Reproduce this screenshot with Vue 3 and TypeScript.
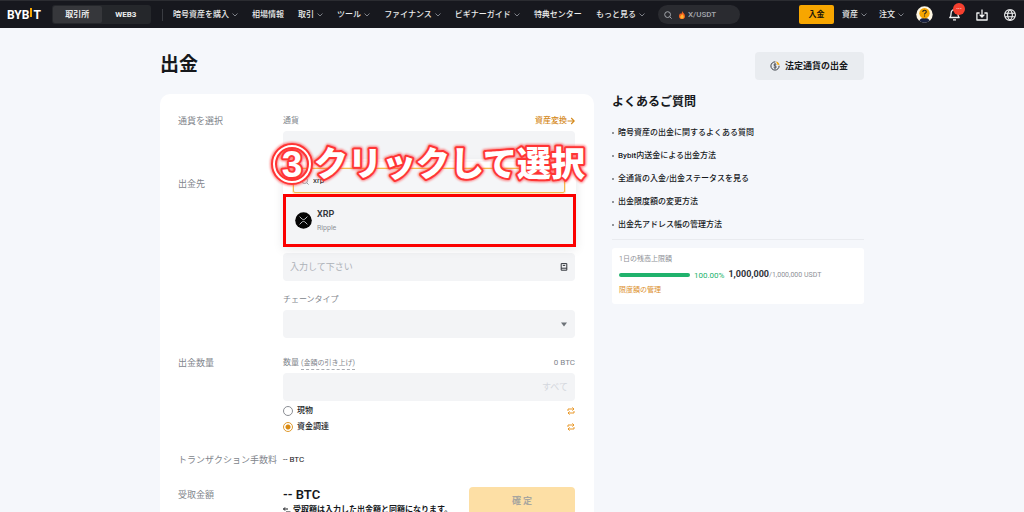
<script setup lang="ts">
import { ref } from 'vue'

interface NavItem {
  label: string
  menu: boolean
}

const navItems: NavItem[] = [
  { label: '暗号資産を購入', menu: true },
  { label: '相場情報', menu: false },
  { label: '取引', menu: true },
  { label: 'ツール', menu: true },
  { label: 'ファイナンス', menu: true },
  { label: 'ビギナーガイド', menu: true },
  { label: '特典センター', menu: false },
  { label: 'もっと見る', menu: true },
]

const faqs: string[] = [
  '暗号資産の出金に関するよくある質問',
  'Bybit内送金による出金方法',
  '全通貨の入金/出金ステータスを見る',
  '出金限度額の変更方法',
  '出金先アドレス帳の管理方法',
]

const accounts = [
  { id: 'spot', label: '現物' },
  { id: 'funding', label: '資金調達' },
]

const account = ref('funding')
const coinQuery = ref('xrp')
const address = ref('')
const amount = ref('')
const chain = ref('')
</script>

<template>
  <div class="page">
    <header class="topbar">
      <a class="logo" href="#" aria-label="BYBIT">
        <span>BYB</span><span class="logo-bar"></span><span>T</span>
      </a>
      <div class="switch">
        <button type="button" class="on">取引所</button>
        <button type="button">WEB3</button>
      </div>
      <span class="divider"></span>
      <nav class="nav">
        <a v-for="item in navItems" :key="item.label" href="#">
          {{ item.label }}
          <svg v-if="item.menu" class="chev" viewBox="0 0 6 4"><path d="M0.5 0.5L3 3L5.5 0.5" /></svg>
        </a>
      </nav>
      <label class="search">
        <svg class="lens" viewBox="0 0 8 8"><circle cx="3.6" cy="3.6" r="2.9" /><path d="M5.7 5.7L7.6 7.6" /></svg>
        <svg class="flame" viewBox="0 0 6 8">
          <path d="M3.2 0C3.6 1.6 6 2.8 6 5.2A3 2.8 0 0 1 0 5.2C0 3.8 0.8 3 1.2 2.2C1.6 2.6 1.8 2.9 2 3.2C2.8 2.2 3.2 1.2 3.2 0Z" fill="#f4611e" />
          <path d="M3.2 3C3.6 4 4.8 4.6 4.8 5.9A1.8 1.8 0 0 1 1.2 5.9C1.2 4.8 2.8 4.2 3.2 3Z" fill="#ffb52e" />
        </svg>
        <input type="text" placeholder="X/USDT" aria-label="検索" />
      </label>
      <div class="tools">
        <button type="button" class="deposit">入金</button>
        <a href="#">資産<svg class="chev" viewBox="0 0 6 4"><path d="M0.5 0.5L3 3L5.5 0.5" /></svg></a>
        <a href="#">注文<svg class="chev" viewBox="0 0 6 4"><path d="M0.5 0.5L3 3L5.5 0.5" /></svg></a>
        <button type="button" class="icon" aria-label="アカウント">
          <svg width="17" height="17" viewBox="0 0 17 17">
            <defs><clipPath id="face"><circle cx="8.5" cy="8.5" r="8.2" /></clipPath></defs>
            <circle cx="8.5" cy="8.5" r="8.2" fill="#fdf6e3" />
            <g clip-path="url(#face)">
              <path d="M3 17C3 13 5.5 12 8.5 12S14 13 14 17Z" fill="#17203f" />
              <circle cx="8.5" cy="7.2" r="5.2" fill="#f7a600" />
            </g>
            <path d="M6.8 5.9C6.8 3.6 10.3 3.7 10.3 5.8C10.3 7.2 8.5 7 8.5 8.5M8.5 9.4V10.5" fill="none" stroke="#27251f" stroke-width="1.1" />
          </svg>
        </button>
        <button type="button" class="icon bell" aria-label="通知">
          <svg width="11" height="13" viewBox="0 0 11 13">
            <path d="M0.8 9.5H10.2C9.2 8.6 8.9 7.8 8.9 5.2C8.9 3 7.6 1.6 5.5 1.6S2.1 3 2.1 5.2C2.1 7.8 1.8 8.6 0.8 9.5ZM4 11.8H7" fill="none" stroke="#f1f2f3" stroke-width="1.3" stroke-linejoin="round" />
          </svg>
          <span class="dot">···</span>
        </button>
        <button type="button" class="icon" aria-label="ダウンロード">
          <svg width="12" height="12" viewBox="0 0 12 12">
            <path d="M3.6 4H0.9V11H11.1V4H8.4M6 0.4V7.8M3.6 5.6L6 8L8.4 5.6" fill="none" stroke="#f1f2f3" stroke-width="1.3" stroke-linejoin="round" />
          </svg>
        </button>
        <button type="button" class="icon" aria-label="言語">
          <svg width="12" height="12" viewBox="0 0 12 12">
            <path d="M6 0.6A5.4 5.4 0 1 0 6 11.4A5.4 5.4 0 1 0 6 0.6ZM6 0.6C2.8 3.4 2.8 8.6 6 11.4C9.2 8.6 9.2 3.4 6 0.6ZM0.8 4.3H11.2M0.8 7.7H11.2" fill="none" stroke="#f1f2f3" stroke-width="1.1" />
          </svg>
        </button>
      </div>
    </header>

    <main class="main">
      <div class="heading">
        <h1>出金</h1>
        <button type="button" class="fiat">
          <svg width="10" height="10" viewBox="0 0 10 10">
            <path d="M5.4 0.9A4.1 4.1 0 1 0 9.1 4.8" fill="none" stroke="#3a3e45" stroke-width="1" />
            <path d="M6.4 3.6C5.8 2.7 3.8 2.8 3.8 4C3.8 5.2 6.4 4.7 6.4 6C6.4 7.2 4.2 7.2 3.6 6.3M5 2.2V7.8" fill="none" stroke="#3a3e45" stroke-width="0.8" />
            <path d="M6.6 0.8A4.4 4.4 0 0 1 9.2 3.6L7.6 3.4Z" fill="#f7a600" stroke="#f7a600" stroke-width="0.6" />
          </svg>
          法定通貨の出金
        </button>
      </div>

      <div class="columns">
        <form class="card" @submit.prevent>
          <section class="row">
            <h2>通貨を選択</h2>
            <div class="coin">
              <div class="caption">
                <span>通貨</span>
                <a class="convert" href="#">資産変換<svg width="8" height="8" viewBox="0 0 8 8"><path d="M0.5 4H7M4.2 1L7.2 4L4.2 7" fill="none" stroke="currentColor" stroke-width="1.1" /></svg></a>
              </div>
              <button type="button" class="field" aria-label="通貨"></button>
              <div class="dropdown">
                <label class="coin-search">
                  <svg width="8" height="8" viewBox="0 0 8 8"><circle cx="3.6" cy="3.6" r="2.9" /><path d="M5.7 5.7L7.6 7.6" /></svg>
                  <input v-model="coinQuery" type="text" aria-label="通貨を検索" />
                </label>
                <button type="button" class="option">
                  <svg width="17" height="17" viewBox="0 0 17 17">
                    <circle cx="8.5" cy="8.5" r="8.3" fill="#050505" />
                    <path d="M4.6 4.6L7 7C7.9 7.8 9.1 7.8 10 7L12.4 4.6M4.6 12.4L7 10C7.9 9.2 9.1 9.2 10 10L12.4 12.4" fill="none" stroke="#b9bcc0" stroke-width="1" />
                  </svg>
                  <span><b>XRP</b><small>Ripple</small></span>
                </button>
              </div>
              <svg class="callout" viewBox="0 0 320 48" width="320" height="48">
                <g class="glow">
                  <circle cx="22" cy="24" r="18" />
                  <text class="num" x="22" y="37">3</text>
                  <text class="words" x="44" y="36">クリックして選択</text>
                </g>
                <g class="outline">
                  <circle cx="22" cy="24" r="18" />
                  <text class="num" x="22" y="37">3</text>
                  <circle class="ring" cx="22" cy="24" r="18" />
                  <text class="words" x="44" y="36">クリックして選択</text>
                </g>
              </svg>
            </div>
          </section>

          <section class="row">
            <h2>出金先</h2>
            <div>
              <label class="field address">
                <input v-model="address" type="text" placeholder="入力して下さい" aria-label="アドレス" />
                <svg width="8" height="8" viewBox="0 0 8 8"><path d="M1.2 0.6H6.8V7.2H1.2ZM1.2 5.2H6.8M2.8 2.4H5.2" fill="none" stroke="#30343a" stroke-width="1" /></svg>
              </label>
              <label class="caption chain-label" for="chain">チェーンタイプ</label>
              <div class="select">
                <select id="chain" v-model="chain" class="field"><option value=""></option></select>
                <svg width="6" height="5" viewBox="0 0 6 5"><path d="M0 0.5H6L3 4.5Z" fill="#6d7278" /></svg>
              </div>
            </div>
          </section>

          <section class="row">
            <h2>出金数量</h2>
            <div>
              <div class="caption">
                <label for="amount">数量 <span class="limit">(金額の引き上げ)</span></label>
                <span>0 BTC</span>
              </div>
              <div class="field amount">
                <input id="amount" v-model="amount" type="text" />
                <button type="button" disabled>すべて</button>
              </div>
              <div class="accounts">
                <div v-for="a in accounts" :key="a.id" class="account">
                  <label><input v-model="account" type="radio" name="account" :value="a.id" />{{ a.label }}</label>
                  <button type="button" :aria-label="a.label + 'を振替'">
                    <svg width="8" height="8" viewBox="0 0 8 8"><path d="M1 4V2H6.6M5.4 0.4L7 2L5.4 3.6M7 4V6H1.4M2.6 4.4L1 6L2.6 7.6" fill="none" stroke="#e9992b" stroke-width="1" /></svg>
                  </button>
                </div>
              </div>
            </div>
          </section>

          <section class="row">
            <h2>トランザクション手数料</h2>
            <div class="fee">-- BTC</div>
          </section>

          <section class="row total">
            <h2>受取金額</h2>
            <div class="receive">
              <div>
                <p class="sum">-- BTC</p>
                <p class="note">
                  <svg width="8" height="8" viewBox="0 0 8 8"><path d="M0.5 3H5M2 1.4L0.5 3L2 4.6M3 6H7.5" fill="none" stroke="#16181c" stroke-width="1" /></svg>受取額は入力した出金額と同額になります。
                </p>
              </div>
              <button type="submit" class="confirm" disabled>確 定</button>
            </div>
          </section>
        </form>

        <aside>
          <h2>よくあるご質問</h2>
          <ul class="faq">
            <li v-for="q in faqs" :key="q"><a href="#">{{ q }}</a></li>
          </ul>
          <div class="quota">
            <p class="muted">1日の残高上限額</p>
            <p class="usage">
              <span class="bar"></span>
              <span class="pct">100.00%</span>
              <span class="muted"><b>1,000,000</b>/1,000,000 USDT</span>
            </p>
            <a href="#">限度額の管理</a>
          </div>
        </aside>
      </div>
    </main>
  </div>
</template>

<style>
html,
body {
  background: #f5f7fb;
  scrollbar-width: none;
}
</style>

<style scoped>
.page {
  height: 100vh;
  overflow: auto;
  scrollbar-width: none;
  background: #f5f7fb;
  color: #16181c;
  font: 8px/16px Roboto, "Noto Sans CJK JP", sans-serif;
}
.page * {
  box-sizing: border-box;
}
h1,
h2,
p,
ul {
  margin: 0;
  padding: 0;
}
a {
  color: inherit;
  text-decoration: none;
}
button,
input,
select {
  margin: 0;
  padding: 0;
  border: 0;
  outline: 0;
  background: none;
  color: inherit;
  font: inherit;
}
input[type="text"] {
  flex: 1;
  min-width: 0;
  width: 100%;
}
svg {
  flex: none;
}

.topbar {
  display: flex;
  align-items: center;
  height: 28px;
  padding: 0 8px 0 7px;
  background: #17181e;
  border-top: 1px solid #2b2c31;
  color: #eceded;
  font-weight: 500;
  white-space: nowrap;
}
.logo {
  display: flex;
  align-items: center;
  width: 45px;
  color: #fff;
  font: bold 12px/14px Roboto, sans-serif;
}
.logo-bar {
  width: 2px;
  height: 9px;
  margin: 0 1px 5px;
  background: #f7a600;
}
.switch {
  display: grid;
  grid-template-columns: 1fr 1fr;
  width: 99px;
  height: 19px;
  padding: 1px;
  border-radius: 3px;
  background: #25272b;
  font-weight: 700;
}
.switch .on {
  border-radius: 2px;
  background: #36373b;
}
.divider {
  width: 1px;
  height: 12px;
  margin: 0 10px 0 11px;
  background: #3a3c42;
}
.nav {
  display: flex;
  flex: 0 1 472px;
  justify-content: space-between;
}
.nav a,
.tools a {
  display: flex;
  align-items: center;
  gap: 3px;
}
.chev {
  width: 6px;
  height: 4px;
  fill: none;
  stroke: #7c7f86;
}
.search {
  display: flex;
  align-items: center;
  gap: 3px;
  width: 82px;
  height: 19px;
  margin-left: 13px;
  padding: 0 6px;
  border-radius: 10px;
  background: #2a2b30;
}
.search input::placeholder {
  color: #a4a7ad;
  opacity: 1;
}
.lens {
  width: 8px;
  height: 8px;
  margin-right: 4px;
  fill: none;
  stroke: #a4a7ad;
}
.flame {
  width: 6px;
  height: 8px;
}
.tools {
  display: flex;
  flex: 1;
  align-items: center;
  justify-content: flex-end;
  gap: 12px;
}
.deposit {
  width: 35px;
  height: 19px;
  margin-right: -4px;
  border-radius: 2px;
  background: #f7a600;
  color: #1a1608;
  font-weight: 700;
}
.icon {
  display: flex;
}
.icon + .icon {
  margin-left: 4px;
}
.bell {
  position: relative;
}
.dot {
  position: absolute;
  top: -5px;
  right: -5px;
  width: 12px;
  height: 12px;
  border-radius: 50%;
  background: #f6402f;
  color: #fff;
  font: 7px/12px Roboto, sans-serif;
}

.main {
  max-width: 704px;
  margin: 0 auto;
  padding: 24px 0 0;
}
.heading {
  display: flex;
  align-items: center;
  justify-content: space-between;
  margin-bottom: 14px;
}
h1 {
  padding-bottom: 2px;
  font-size: 19px;
  line-height: 24px;
  font-weight: 700;
}
.fiat {
  display: flex;
  align-items: center;
  gap: 5px;
  height: 28px;
  padding: 0 16px 0 15px;
  border-radius: 4px;
  background: #e9ecf0;
  font-size: 9px;
  font-weight: 700;
}
.columns {
  display: grid;
  grid-template-columns: 1fr 252px;
  gap: 18px;
}
.card {
  display: flex;
  flex-direction: column;
  gap: 17px;
  padding: 19px 19px 18px 18px;
  border-radius: 10px;
  background: #fff;
}
.row {
  display: grid;
  grid-template-columns: 105px 1fr;
}
.row h2 {
  color: #81858c;
  font-size: 9px;
  font-weight: 400;
  white-space: nowrap;
}
.total {
  margin-top: 2px;
}
.caption {
  display: flex;
  justify-content: space-between;
  margin-bottom: 2px;
  color: #81858c;
}
.convert {
  display: flex;
  align-items: center;
  color: #d58a1c;
  font-weight: 500;
}
.field {
  display: flex;
  align-items: center;
  width: 100%;
  height: 28px;
  padding: 0 7px;
  border-radius: 4px;
  background: #f3f4f6;
  font-size: 9px;
}
.coin {
  position: relative;
}
.dropdown {
  position: absolute;
  z-index: 1;
  top: 49px;
  left: 0;
  right: -1px;
  background: #fff;
  box-shadow: 0 2px 10px rgba(20, 30, 50, 0.1);
}
.coin-search {
  display: flex;
  align-items: center;
  gap: 4px;
  height: 25px;
  margin: 6px 11px 1px 10px;
  padding: 0 7px;
  border: 1px solid #f5b94e;
  border-radius: 2px;
  background: #f5f6f8;
  box-shadow: 0 0 0 1px #fdebc8;
}
.coin-search svg {
  fill: none;
  stroke: #9a9da3;
}
.option {
  display: flex;
  align-items: center;
  gap: 5px;
  width: 100%;
  height: 53px;
  padding-left: 9px;
  border: 3px solid #fb0000;
  background: #f3f4f6;
  text-align: left;
}
.option b,
.option small {
  display: block;
  font-size: 9px;
  line-height: 14px;
  font-weight: 600;
  color: #30343a;
}
.option small {
  color: #8d9096;
  font-size: 7px;
  font-weight: 400;
}
.callout {
  position: absolute;
  z-index: 2;
  top: 27px;
  left: -13px;
  overflow: visible;
  pointer-events: none;
  font-family: "Noto Sans CJK JP", sans-serif;
  font-weight: 900;
}
.callout text {
  fill: #fff;
  paint-order: stroke;
  stroke: #ff3535;
  stroke-width: 4px;
  stroke-linejoin: round;
}
.callout circle {
  fill: none;
  stroke: #ff3535;
  stroke-width: 6px;
}
.callout .ring {
  stroke: #fff;
  stroke-width: 2px;
}
.callout .glow {
  filter: blur(1px);
  opacity: 0.6;
}
.callout .glow text {
  stroke-width: 6px;
}
.callout .glow circle {
  stroke-width: 8px;
}
.callout .num {
  font-family: "Liberation Sans", sans-serif;
  font-size: 37px;
  font-weight: 700;
  text-anchor: middle;
}
.words {
  font-size: 34px;
}

.address {
  margin-top: 77px;
}
.address input::placeholder {
  color: #adb1b8;
  opacity: 1;
}
.chain-label {
  margin-top: 11px;
}
.select {
  display: grid;
  align-items: center;
}
.select > * {
  grid-area: 1 / 1;
}
.select select {
  appearance: none;
}
.select svg {
  justify-self: end;
  margin-right: 8px;
  pointer-events: none;
}
.limit {
  display: inline-block;
  border-bottom: 1px dashed #a9acb2;
  font-size: 7px;
  line-height: 11px;
}
.amount button {
  color: #d3d7dd;
}
.accounts {
  margin-top: 2px;
}
.account {
  display: flex;
  align-items: center;
  justify-content: space-between;
  height: 16px;
  font-weight: 500;
}
.account label {
  display: flex;
  align-items: center;
  gap: 4px;
}
.account button {
  display: flex;
}
.account input {
  appearance: none;
  width: 10px;
  height: 10px;
  border: 1px solid #8b8e94;
  border-radius: 50%;
}
.account input:checked {
  border-color: #e09a2c;
  background: radial-gradient(circle, #d98a12 0 2px, transparent 3px);
}
.receive {
  display: flex;
  align-items: flex-start;
  justify-content: space-between;
}
.sum {
  font-size: 13px;
  line-height: 16px;
  font-weight: 600;
}
.note {
  display: flex;
  align-items: center;
  gap: 2px;
  font-weight: 700;
  line-height: 14px;
  white-space: nowrap;
}
.confirm {
  width: 106px;
  height: 28px;
  border-radius: 4px;
  background: #fddfa5;
  color: #a8a69f;
  font-size: 9px;
  font-weight: 700;
}

aside h2 {
  font-size: 12px;
  line-height: 16px;
  font-weight: 700;
}
.faq {
  padding: 11px 0 3px;
  border-bottom: 1px solid #e9ebef;
  list-style: none;
  line-height: 23px;
  font-weight: 500;
}
.faq li {
  display: flex;
  align-items: center;
  gap: 4px;
}
.faq li::before {
  content: "";
  width: 2px;
  height: 2px;
  border-radius: 50%;
  background: #70747a;
}
.quota {
  margin-top: 8px;
  padding: 4px 7px 6px;
  border-radius: 3px;
  background: #fff;
  font-size: 7px;
  line-height: 15px;
}
.quota a {
  display: block;
  color: #dc8f2b;
}
.muted {
  color: #8d9096;
}
.usage {
  display: flex;
  align-items: center;
  gap: 4px;
  white-space: nowrap;
}
.bar {
  width: 71px;
  height: 4px;
  border-radius: 2px;
  background: #20b26c;
}
.pct {
  color: #20b26c;
  font-size: 8px;
}
.usage b {
  color: #30343a;
  font-size: 9px;
}
</style>
